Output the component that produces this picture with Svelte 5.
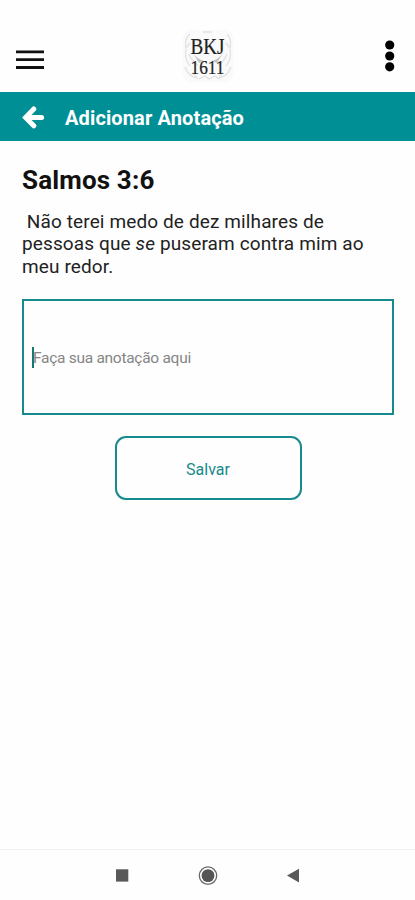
<script>
  let note = "";
  const title = "Adicionar Anotação";
  const reference = "Salmos 3:6";
  let menuOpen = false;

  function toggleMenu() {
    menuOpen = !menuOpen;
  }
</script>

<div class="screen">
  <header class="top">
    <button class="icon menu" aria-label="Menu" aria-expanded={menuOpen} on:click={toggleMenu}>
      <svg width="28" height="20" viewBox="0 0 28 20">
        <path d="M0 1.9h28M0 9.7h28M0 17.5h28" stroke="#111" stroke-width="2.8" />
      </svg>
    </button>

    <svg class="logo" width="54" height="54" viewBox="0 0 54 54">
      <rect x="1.5" y="1" width="51" height="52" rx="9" fill="#fafafa" />
      <g fill="none" stroke="#e2e2e2" stroke-width="1.3">
        <path d="M9 5q-6 5-4 14l4-5M5 20q-2 10 4 17M4 38q3 9 12 11l-4-6M46 5q5 5 3 14l-4-5M49 20q2 10-4 17M50 38q-3 9-12 11l4-6" />
        <path d="M8 25q3 8 9 11M46 25q-3 8-9 11M18 50l6-3 4 3 6-3 4 3M22 3h9" />
      </g>
      <path d="M12 24q4 6 11 8l-5 2zM42 24q-4 6-11 8l5 2z" fill="#c4c4c4" />
      <text class="logo-text" x="9.5" y="25" textLength="34" lengthAdjust="spacingAndGlyphs">BKJ</text>
      <text class="logo-text small" x="9.5" y="45.3" textLength="34" lengthAdjust="spacingAndGlyphs">1611</text>
    </svg>

    <button class="icon more" aria-label="Mais">
      <svg width="10" height="32" viewBox="0 0 10 32">
        <circle cx="4.7" cy="5" r="4.6" />
        <circle cx="4.7" cy="16" r="4.6" />
        <circle cx="4.7" cy="26.8" r="4.6" />
      </svg>
    </button>
  </header>

  <div class="bar">
    <button class="icon" aria-label="Voltar">
      <svg width="23" height="23" viewBox="0 0 23 23">
        <path d="M11.8 3L3.6 11.4l8.2 8.4M4.5 11.4H19.6" fill="none" stroke="#fff" stroke-width="5" stroke-linecap="round" stroke-linejoin="miter" />
      </svg>
    </button>
    <h1>{title}</h1>
  </div>

  <main>
    <h2>{reference}</h2>
    <p>
      &nbsp;Não terei medo de dez milhares de<br />pessoas que <em>se</em> puseram contra mim ao<br />meu redor.
    </p>

    <div class="field">
      <span class="caret"></span>
      <input type="text" placeholder="Faça sua anotação aqui" bind:value={note} />
    </div>

    <button class="save">Salvar</button>
  </main>

  <footer>
    <svg width="14" height="20" viewBox="0 0 14 20">
      <rect x="1" y="3.3" width="12.3" height="12.3" fill="#595959" />
    </svg>
    <svg width="20" height="20" viewBox="0 0 20 20">
      <circle cx="10" cy="9.6" r="8.7" fill="none" stroke="#666" stroke-width="1.3" />
      <circle cx="10" cy="9.6" r="6.4" fill="#555" />
    </svg>
    <svg width="14" height="20" viewBox="0 0 14 20">
      <path d="M0 9.6L12 2.8V16.4z" fill="#595959" />
    </svg>
  </footer>
</div>

<style>
  :global(body) {
    background: #fefefe;
  }

  .screen {
    display: flex;
    flex-direction: column;
    width: 415px;
    height: 900px;
    overflow: hidden;
    font-family: Roboto, "Liberation Sans", sans-serif;
    color: #111;
  }

  button {
    font-family: inherit;
    cursor: pointer;
  }

  .icon {
    display: flex;
    padding: 0;
    border: none;
    background: none;
  }

  svg {
    display: block;
  }

  .top {
    box-sizing: border-box;
    display: grid;
    grid-template-columns: 1fr 54px 1fr;
    align-items: start;
    height: 92px;
    padding: 29px 20px 0 16px;
  }

  .logo {
    margin-left: 2px;
  }

  .menu {
    margin-top: 21px;
  }

  .more {
    justify-self: end;
    margin-top: 11px;
  }

  .logo-text {
    font-family: "Liberation Serif", serif;
    font-size: 22.5px;
    fill: #222;
    stroke: #222;
    stroke-width: 0.2px;
  }

  .small {
    font-size: 19px;
  }

  .bar {
    box-sizing: border-box;
    display: flex;
    align-items: center;
    gap: 20px;
    height: 49px;
    padding: 1px 22px 0;
    background: #008f95;
    color: #fff;
  }

  h1 {
    margin: 1px 0 0;
    font-size: 20px;
    line-height: 24px;
    font-weight: 700;
    letter-spacing: 0.13px;
  }

  main {
    flex: 1;
    display: flex;
    flex-direction: column;
    padding: 24px 21px 0 22px;
  }

  h2 {
    margin: 0;
    font-size: 26px;
    line-height: 30px;
    font-weight: 700;
    letter-spacing: 0.15px;
  }

  p {
    margin: 16px 0 0;
    font-size: 19px;
    line-height: 22.4px;
    white-space: nowrap;
    letter-spacing: 0.12px;
    color: #222;
  }

  .field {
    box-sizing: border-box;
    display: flex;
    align-items: center;
    height: 116px;
    margin-top: 21px;
    padding-left: 8px;
    border: 2px solid #168a8c;
  }

  .caret {
    width: 2px;
    height: 21px;
    margin-right: -1px;
    background: #16786f;
  }

  input {
    flex: 1;
    padding: 2px 0 0;
    border: none;
    outline: none;
    background: none;
    font: 15.5px Roboto, sans-serif;
    letter-spacing: -0.28px;
  }

  input::placeholder {
    color: #858585;
    opacity: 1;
  }

  .save {
    align-self: center;
    box-sizing: border-box;
    width: 187px;
    height: 64px;
    margin-top: 21px;
    padding-top: 3px;
    border: 2px solid #168a8c;
    border-radius: 11px;
    background: none;
    font-size: 16px;
    color: #168a8c;
  }

  footer {
    box-sizing: border-box;
    display: flex;
    justify-content: center;
    gap: 69px;
    height: 51px;
    padding-top: 16px;
    border-top: 1px solid #f2f2f2;
  }
</style>
